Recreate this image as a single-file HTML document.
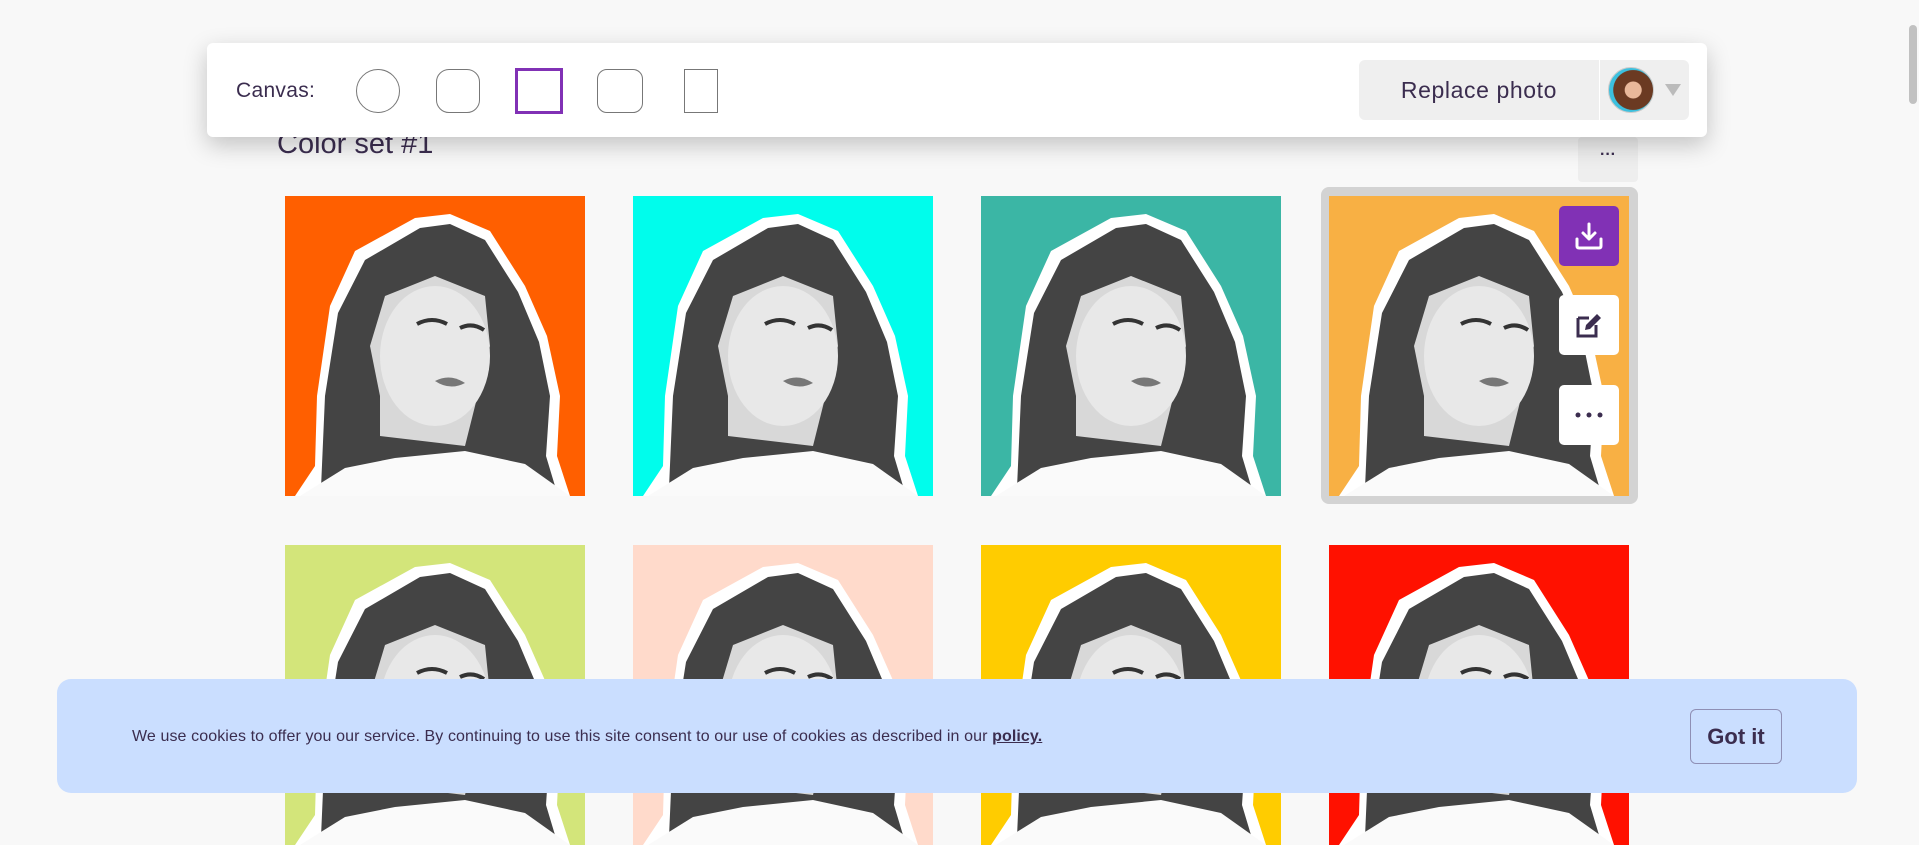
<!DOCTYPE html>
<html><head><meta charset="utf-8"><style>
*{box-sizing:border-box;margin:0;padding:0}
body{width:1919px;height:816px;overflow:hidden;background:#f8f8f8;font-family:"Liberation Sans",sans-serif;color:#3b2d4f;position:relative}
.abs{position:absolute}
.tile{position:absolute;width:300px;height:300px;overflow:hidden}
.tile svg{display:block}
.sel{position:absolute;left:1321px;top:187px;width:317px;height:317px;background:#d3d3d3;border-radius:8px}
.btn{position:absolute;left:1559px;width:60px;height:60px;background:#fff;border-radius:5px;display:flex;align-items:center;justify-content:center}
</style></head><body>
<svg width="0" height="0" style="position:absolute"><defs>
<g id="p">
<path d="M10,300 L30,270 L32,200 L45,110 L70,55 L130,22 L165,18 L205,35 L240,90 L262,140 L275,200 L272,260 L285,300 Z" fill="#fff"/>
<path d="M36,292 L40,200 L53,117 L80,64 L135,32 L165,28 L200,44 L233,96 L254,146 L265,200 L261,260 L270,290 Z" fill="#444"/>
<path d="M95,240 L95,200 L85,150 L100,100 L150,80 L200,100 L205,150 L190,210 L180,250 Z" fill="#d8d8d8"/>
<ellipse cx="150" cy="160" rx="55" ry="70" fill="#e8e8e8"/>
<path d="M132,128 q15,-8 30,0 M175,132 q12,-6 24,2" stroke="#333" stroke-width="4" fill="none"/>
<path d="M150,185 q15,-8 30,2 q-15,8 -30,-2z" fill="#777"/>
<path d="M15,300 L60,272 L110,262 L180,255 L240,268 L285,300 Z" fill="#fafafa"/>
</g></defs></svg>

<div class="abs" style="left:277px;top:128px;font-size:29px;color:#3b2d4f">Color set #1</div>
<div class="abs" style="left:1578px;top:137px;width:60px;height:45px;background:#eee;border-radius:4px;text-align:center;font-size:16px;font-weight:bold;line-height:36px">···</div>

<div class="sel"></div>
<div class="tile" style="left:285px;top:196px;background:#ff5f00"><svg width="300" height="300"><use href="#p"/></svg></div>
<div class="tile" style="left:633px;top:196px;background:#00fdec"><svg width="300" height="300"><use href="#p"/></svg></div>
<div class="tile" style="left:981px;top:196px;background:#3bb6a5"><svg width="300" height="300"><use href="#p"/></svg></div>
<div class="tile" style="left:1329px;top:196px;background:#f8b044"><svg width="300" height="300"><use href="#p"/></svg></div>
<div class="tile" style="left:285px;top:545px;background:#d3e57a"><svg width="300" height="300"><use href="#p"/></svg></div>
<div class="tile" style="left:633px;top:545px;background:#ffdacb"><svg width="300" height="300"><use href="#p"/></svg></div>
<div class="tile" style="left:981px;top:545px;background:#ffcc00"><svg width="300" height="300"><use href="#p"/></svg></div>
<div class="tile" style="left:1329px;top:545px;background:#ff1100"><svg width="300" height="300"><use href="#p"/></svg></div>

<div class="btn" style="top:206px;background:#8131b5"><svg width="30" height="30" viewBox="0 0 30 30" fill="none" stroke="#fff" stroke-width="3" stroke-linecap="round" stroke-linejoin="round"><path d="M15,3 V18 M9,12 L15,18 L21,12 M3,18 V25 Q3,27 5,27 H25 Q27,27 27,25 V18"/></svg></div>
<div class="btn" style="top:295px"><svg width="28" height="28" viewBox="0 0 28 28"><path d="M3,7 H14 M3,7 V25 H21 V14" stroke="#3b2d4f" stroke-width="3" fill="none"/><path d="M10,19 L11,14 L22,3 L26,7 L15,18 Z" fill="#3b2d4f"/></svg></div>
<div class="btn" style="top:385px"><svg width="30" height="8"><circle cx="4" cy="4" r="2.5" fill="#3b2d4f"/><circle cx="15" cy="4" r="2.5" fill="#3b2d4f"/><circle cx="26" cy="4" r="2.5" fill="#3b2d4f"/></svg></div>

<div class="abs" style="left:207px;top:43px;width:1500px;height:94px;background:#fff;border-radius:6px;box-shadow:0 8px 24px rgba(0,0,0,0.22)">
<div class="abs" style="left:29px;top:36px;font-size:21px;letter-spacing:0.3px;color:#3b2d4f">Canvas:</div>
<div class="abs" style="left:149px;top:26px;width:44px;height:44px;border:1px solid #777;border-radius:50%"></div>
<div class="abs" style="left:229px;top:26px;width:44px;height:44px;border:1px solid #777;border-radius:13px"></div>
<div class="abs" style="left:308px;top:25px;width:48px;height:46px;border:3px solid #8131b5"></div>
<div class="abs" style="left:390px;top:26px;width:46px;height:44px;border:1px solid #777;border-radius:10px"></div>
<div class="abs" style="left:477px;top:26px;width:34px;height:44px;border:1px solid #777"></div>
<div class="abs" style="left:1152px;top:17px;width:240px;height:60px;background:#efefef;border-radius:6px 0 0 6px;font-size:23px;letter-spacing:0.6px;text-align:center;line-height:60px">Replace photo</div>
<div class="abs" style="left:1393px;top:17px;width:89px;height:60px;background:#efefef;border-radius:0 6px 6px 0">
<div class="abs" style="left:8px;top:7px;width:46px;height:46px;border-radius:50%;background:radial-gradient(circle at 55% 50%,#e9b89a 0 25%,#6b3a22 27% 60%,#3cc0de 62%);border:1px solid #ccc"></div>
<div class="abs" style="left:65px;top:24px;width:0;height:0;border-left:8px solid transparent;border-right:8px solid transparent;border-top:12px solid #bbb"></div>
</div>
</div>

<div class="abs" style="left:57px;top:679px;width:1800px;height:114px;background:#cadeff;border-radius:14px">
<div class="abs" style="left:75px;top:49px;font-size:16px;letter-spacing:0.1px;color:#3b2d4f">We use cookies to offer you our service. By continuing to use this site consent to our use of cookies as described in our <b style="text-decoration:underline">policy.</b></div>
<div class="abs" style="left:1633px;top:30px;width:92px;height:55px;border:1px solid #8f8fb5;border-radius:6px;font-size:22px;font-weight:bold;text-align:center;line-height:53px">Got it</div>
</div>

<div class="abs" style="left:1909px;top:25px;width:8px;height:79px;background:#c1c1c1;border-radius:4px"></div>
</body></html>
